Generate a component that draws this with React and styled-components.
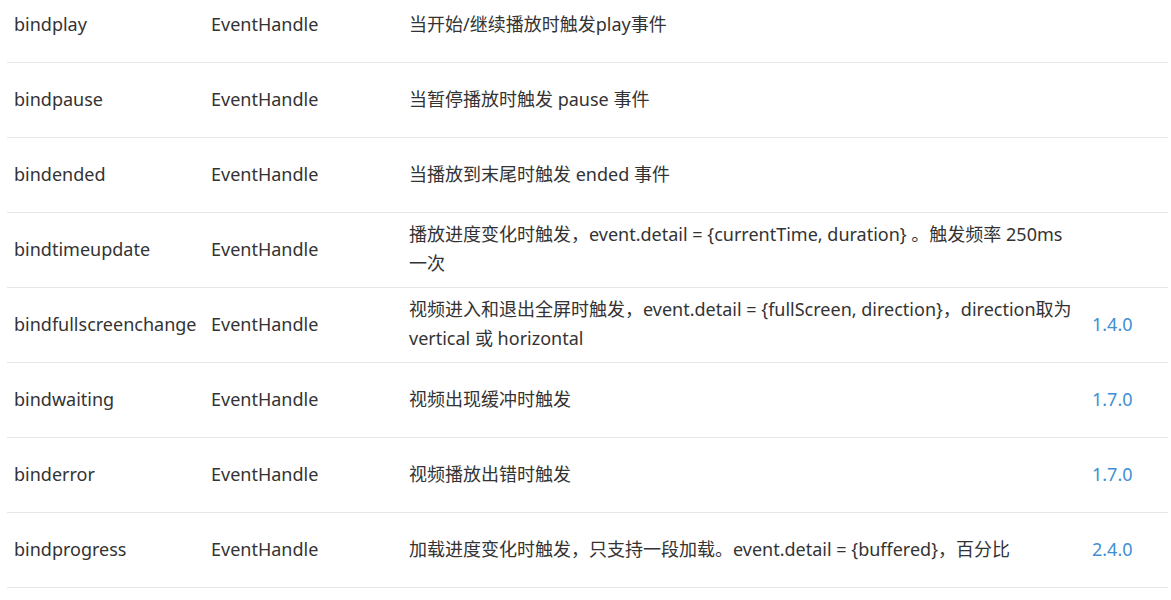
import React from 'react'
import styled, { createGlobalStyle } from "styled-components";

const rows = [
  { name: 'bindplay', type: 'EventHandle', desc: '当开始/继续播放时触发play事件' },
  { name: 'bindpause', type: 'EventHandle', desc: '当暂停播放时触发 pause 事件' },
  { name: 'bindended', type: 'EventHandle', desc: '当播放到末尾时触发 ended 事件' },
  { name: 'bindtimeupdate', type: 'EventHandle', desc: '播放进度变化时触发，event.detail = {currentTime, duration} 。触发频率 250ms 一次' },
  { name: 'bindfullscreenchange', type: 'EventHandle', desc: '视频进入和退出全屏时触发，event.detail = {fullScreen, direction}，direction取为 vertical 或 horizontal', version: '1.4.0' },
  { name: 'bindwaiting', type: 'EventHandle', desc: '视频出现缓冲时触发', version: '1.7.0' },
  { name: 'binderror', type: 'EventHandle', desc: '视频播放出错时触发', version: '1.7.0' },
  { name: 'bindprogress', type: 'EventHandle', desc: '加载进度变化时触发，只支持一段加载。event.detail = {buffered}，百分比', version: '2.4.0' },
]

const Global = createGlobalStyle`
  body {
    margin: 0;
    background: #fff;
    font-family: "Noto Sans", "Noto Sans CJK SC", sans-serif;
    color: #333;
    overflow: hidden;
  }
`

const Table = styled.div`
  margin: -12px 3px 0 7px;
`

const Row = styled.div`
  display: grid;
  grid-template-columns: 197px 198px 683px 1fr;
  height: 75px;
  box-sizing: border-box;
  border-bottom: 1px solid #e6e6e6;
`

const Cell = styled.div`
  display: flex;
  align-items: center;
  padding: 0 7px 2px;
  font-size: 18px;
  line-height: 29px;
  color: ${p => p.$link ? '#3f8fd2' : '#333'};
`

const App = () => {
  return (
    <>
      <Global />
      <Table>
        {rows.map(r => (
          <Row key={r.name}>
            <Cell>{r.name}</Cell>
            <Cell>{r.type}</Cell>
            <Cell>{r.desc}</Cell>
            <Cell $link>{r.version}</Cell>
          </Row>
        ))}
      </Table>
    </>
  )
}

export default App;
